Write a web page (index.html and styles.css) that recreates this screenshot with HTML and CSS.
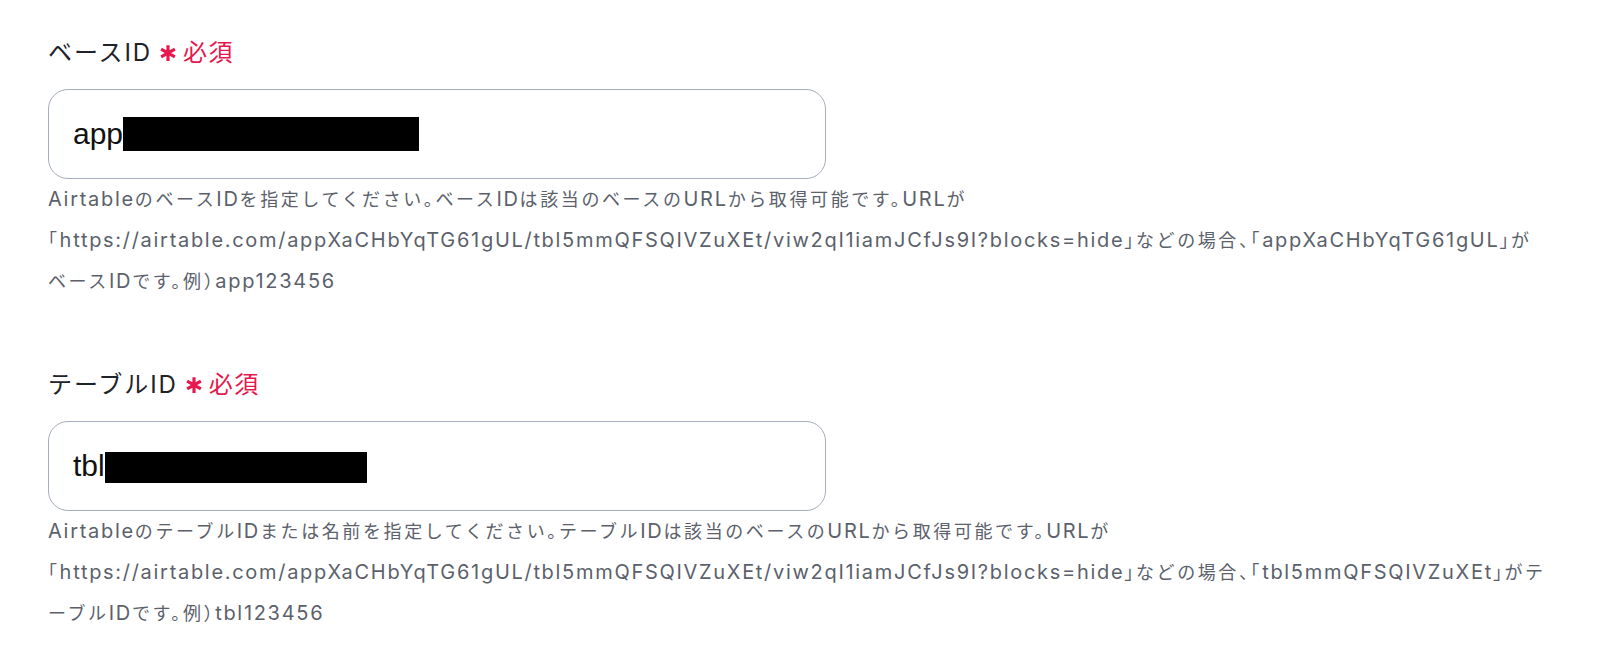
FILE: index.html
```html
<!DOCTYPE html>
<html lang="ja">
<head>
<meta charset="utf-8">
<link rel="stylesheet" href="styles.css">
</head>
<body>
<main class="form">
  <section class="field">
    <div class="label"><span class="label-text">ベースID</span><svg class="req-mark" viewBox="0 0 16 16"><path d="M8 1V15M1.9 4.5L14.1 11.5M1.9 11.5L14.1 4.5"/></svg><span class="req">必須</span></div>
    <div class="input"><span class="value">app</span><span class="redact redact-1"></span></div>
    <p class="desc"><span class="en">Airtable</span>のベース<span class="en">ID</span>を指定してください。ベース<span class="en">ID</span>は該当のベースの<span class="en">URL</span>から取得可能です。<span class="en">URL</span>が「<span class="en">https://airtable.com/appXaCHbYqTG61gUL/tbl5mmQFSQIVZuXEt/viw2qI1iamJCfJs9I?blocks=hide</span>」などの場合、「<span class="en">appXaCHbYqTG61gUL</span>」がベース<span class="en">ID</span>です。例）<span class="en">app123456</span></p>
  </section>
  <section class="field">
    <div class="label"><span class="label-text">テーブルID</span><svg class="req-mark" viewBox="0 0 16 16"><path d="M8 1V15M1.9 4.5L14.1 11.5M1.9 11.5L14.1 4.5"/></svg><span class="req">必須</span></div>
    <div class="input"><span class="value">tbl</span><span class="redact redact-2"></span></div>
    <p class="desc"><span class="en">Airtable</span>のテーブル<span class="en">ID</span>または名前を指定してください。テーブル<span class="en">ID</span>は該当のベースの<span class="en">URL</span>から取得可能です。<span class="en">URL</span>が「<span class="en">https://airtable.com/appXaCHbYqTG61gUL/tbl5mmQFSQIVZuXEt/viw2qI1iamJCfJs9I?blocks=hide</span>」などの場合、「<span class="en">tbl5mmQFSQIVZuXEt</span>」がテーブル<span class="en">ID</span>です。例）<span class="en">tbl123456</span></p>
  </section>
</main>
</body>
</html>
```
FILE: styles.css
```css
html, body {
  margin: 0;
  padding: 0;
  background: #ffffff;
}
body {
  font-family: Inter, "Noto Sans CJK JP", sans-serif;
  color: #1f2329;
}
.form {
  padding: 37px 0 0 48px;
  width: 1501px;
  display: flex;
  flex-direction: column;
  gap: 67px;
}
.field {
  display: flex;
  flex-direction: column;
}
.label {
  display: flex;
  align-items: center;
  height: 32px;
  line-height: 32px;
  margin-bottom: 20px;
}
.label-text {
  font-size: 24px;
  letter-spacing: 1.9px;
  color: #1f2329;
}
.req-mark {
  width: 18px;
  height: 18px;
  margin: 0 6px 0 7px;
  fill: none;
  stroke: #e8174d;
  stroke-width: 2.8;
}
.req {
  color: #e8174d;
  font-size: 24px;
  letter-spacing: 1.5px;
}
.input {
  box-sizing: border-box;
  width: 778px;
  height: 90px;
  border: 1.5px solid #a4aeba;
  border-radius: 20px;
  display: flex;
  align-items: center;
  padding-left: 24px;
}
.value {
  font-family: "Liberation Sans", Arial, sans-serif;
  font-size: 30px;
  color: #111;
}
.redact {
  display: inline-block;
  background: #000;
}
.redact-1 { width: 296px; height: 34px; }
.redact-2 { width: 262px; height: 31px; margin-top: 2px; }
.desc {
  margin: 0;
  font-size: 18px;
  line-height: 40px;
  letter-spacing: 2.6px;
  color: #5b616b;
  font-feature-settings: "halt";
}
.desc .en {
  font-size: 20px;
  letter-spacing: 1.7px;
  font-feature-settings: normal;
}
```
